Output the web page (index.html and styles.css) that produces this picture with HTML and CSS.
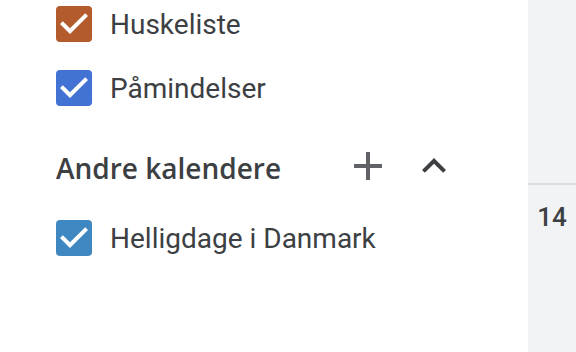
FILE: index.html
```html
<!DOCTYPE html>
<html lang="da">
<head>
    <meta charset="UTF-8">
    <meta name="viewport" content="width=device-width, initial-scale=1.0">
    <title>Kalendere</title>
    <link rel="stylesheet" href="styles.css">
</head>
<body>
    <div class="page">
        <div class="sidebar">
            <ul class="cal-list">
                <li class="cal-item">
                    <svg class="check" viewBox="3 3 18 18"><rect x="3" y="3" width="18" height="18" rx="2" fill="#b35b2c"/><path d="M10 17l-5-5 1.41-1.41L10 14.17l7.59-7.59L19 8z" fill="#fff"/></svg>
                    <span class="cal-name">Huskeliste</span>
                </li>
                <li class="cal-item">
                    <svg class="check" viewBox="3 3 18 18"><rect x="3" y="3" width="18" height="18" rx="2" fill="#4272d3"/><path d="M10 17l-5-5 1.41-1.41L10 14.17l7.59-7.59L19 8z" fill="#fff"/></svg>
                    <span class="cal-name">Påmindelser</span>
                </li>
            </ul>

            <div class="section-head">
                <span class="section-title">Andre kalendere</span>
                <svg class="icon-btn add" viewBox="0 0 24 24"><path d="M19 13h-6v6h-2v-6H5v-2h6V5h2v6h6v2z" fill="#5f6368"/></svg>
                <svg class="icon-btn" viewBox="0 0 24 24"><path d="M12 8l-6 6 1.41 1.41L12 10.83l4.59 4.58L18 14z" fill="#3c4043"/></svg>
            </div>

            <ul class="cal-list">
                <li class="cal-item">
                    <svg class="check" viewBox="3 3 18 18"><rect x="3" y="3" width="18" height="18" rx="2" fill="#3f87c0"/><path d="M10 17l-5-5 1.41-1.41L10 14.17l7.59-7.59L19 8z" fill="#fff"/></svg>
                    <span class="cal-name">Helligdage i Danmark</span>
                </li>
            </ul>
        </div>
        <div class="week-col">
            <div class="week-top"></div>
            <div class="week-num">14</div>
        </div>
    </div>
</body>
</html>
```

FILE: styles.css
```css
body,ul,li{
    margin: 0;
    padding: 0;
    list-style: none;
}
body{
    font-family: Roboto, "Liberation Sans", sans-serif;
    color: #3c4043;
    background: #fff;
    overflow: hidden;
}
.page{
    display: flex;
    height: 352px;
}
.sidebar{
    width: 528px;
    padding-left: 56px;
    box-sizing: border-box;
    margin-top: -8px;
}
.cal-item{
    display: flex;
    align-items: center;
    height: 64px;
}
.check{
    width: 36px;
    height: 36px;
    flex: none;
}
.cal-name{
    margin-left: 18px;
    font-size: 28px;
    white-space: nowrap;
}
.section-head{
    display: flex;
    align-items: center;
    height: 48px;
    padding: 22px 0 16px;
}
/* 标题字体比列表更宽 */
.section-title{
    font-family: "Open Sans", Roboto, sans-serif;
    font-size: 28px;
    font-weight: 600;
    width: 288px;
    padding-top: 4px;
    white-space: nowrap;
}
.icon-btn{
    width: 48px;
    height: 48px;
    flex: none;
}
.icon-btn.add{
    margin-right: 18px;
}
.week-col{
    flex: 1;
    background: #f1f3f4;
}
.week-top{
    height: 183px;
    border-bottom: 2px solid #dadce0;
}
.week-num{
    text-align: center;
    font-size: 26px;
    font-weight: 500;
    margin-top: 17px;
}
```
